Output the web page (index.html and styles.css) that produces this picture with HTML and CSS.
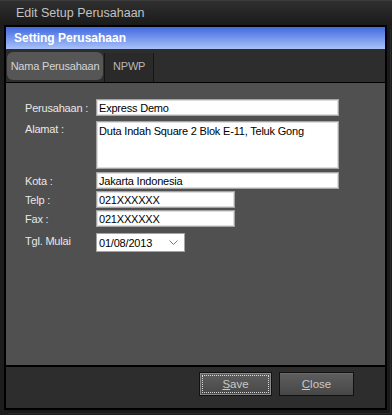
FILE: index.html
```html
<!DOCTYPE html>
<html>
<head>
<meta charset="utf-8">
<title>Edit Setup Perusahaan</title>
<link rel="stylesheet" href="styles.css">
</head>
<body>
<div class="window">
<div class="titlebar">Edit Setup Perusahaan</div>
<div class="frame">
<div class="caption">Setting Perusahaan</div>
<div class="tabs">
<div class="tab active">Nama Perusahaan</div>
<div class="tab">NPWP</div>
</div>
<div class="panel">
<form class="form" onsubmit="return false;">
<label class="lbl">Perusahaan :</label>
<input class="field wide" type="text" value="Express Demo">
<label class="lbl top">Alamat :</label>
<textarea class="field wide area">Duta Indah Square 2 Blok E-11, Teluk Gong</textarea>
<label class="lbl">Kota :</label>
<input class="field wide" type="text" value="Jakarta Indonesia">
<label class="lbl">Telp :</label>
<input class="field short" type="text" value="021XXXXXX">
<label class="lbl">Fax :</label>
<input class="field short" type="text" value="021XXXXXX">
<label class="lbl top">Tgl. Mulai</label>
<div class="date">
<span>01/08/2013</span>
<svg width="9" height="6" viewBox="0 0 9 6"><polyline points="0.5,0.5 4.5,4.5 8.5,0.5" fill="none" stroke="#7a7a7a" stroke-width="1"/></svg>
</div>
</form>
</div>
<div class="footer">
<button type="button" class="btn focus"><span><u>S</u>ave</span></button>
<button type="button" class="btn"><span><u>C</u>lose</span></button>
</div>
</div>
</div>
</body>
</html>
```
FILE: styles.css
```css
body {
 margin: 0;
 background: #1c1c1c;
 font-family: "Liberation Sans", Arial, sans-serif;
}
.window {
 width: 392px;
 height: 415px;
 background: #1d1d1d;
 overflow: hidden;
}
.titlebar {
 height: 25px;
 box-sizing: border-box;
 padding-left: 16px;
 line-height: 24px;
 font-size: 12.5px;
 color: #c2c2c2;
 background: linear-gradient(#2f2f2f, #1a1a1a);
 border-top: 1px solid #3c3c3c;
}
.frame {
 width: 383px;
 height: 385px;
 box-sizing: border-box;
 margin: 0 5px 0 4px;
 border: 2px solid #000;
 display: flex;
 flex-direction: column;
 box-shadow: 3px 3px 0 0 #1a1a1a, 4px 4px 0 0 #2a2a2a;
}
.caption {
 height: 22px;
 line-height: 22px;
 padding-left: 8px;
 font-size: 12px;
 font-weight: bold;
 color: #fff;
 background: linear-gradient(#4169e0, #a9c1f8);
}
.tabs {
 height: 33px;
 display: flex;
 align-items: flex-start;
 background: #2d2d2d;
 border-bottom: 1px solid #000;
 font-size: 11px;
 letter-spacing: -0.2px;
}
.tab {
 box-sizing: border-box;
}
.tab.active {
 width: 96px;
 height: 28px;
 margin: 3px 1px 0 1px;
 line-height: 28px;
 text-align: center;
 border-radius: 6px;
 background: #565656;
 color: #d4d4d4;
}
.tab + .tab {
 width: 50px;
 height: 29px;
 margin-top: 4px;
 padding-left: 8px;
 line-height: 26px;
 color: #b8b8b8;
 background: #2a2a2a;
 border-left: 1px solid #151515;
 border-right: 1px solid #151515;
}
.panel {
 height: 284px;
 box-sizing: border-box;
 padding: 16px 0 0 19px;
 background: #505050;
 border-bottom: 2px solid #000;
}
.form {
 display: grid;
 grid-template-columns: 71px 243px;
 font-size: 11px;
 letter-spacing: -0.2px;
}
.lbl {
 color: #e8e8e8;
 align-self: center;
}
.lbl.top {
 align-self: start;
 padding-top: 2px;
}
.field {
 box-sizing: border-box;
 height: 17px;
 margin: 0;
 padding: 0 2px;
 border: 1px solid #a4a4a4;
 box-shadow: inset 0 0 0 1px #dedede;
 background: #fff;
 color: #000;
 font: inherit;
 letter-spacing: inherit;
 outline: none;
}
.short {
 width: 139px;
}
.area {
 height: 48px;
 padding-top: 3px;
 resize: none;
 overflow: hidden;
}
.form > :nth-child(3), .form > :nth-child(4) {
 margin-top: 5px;
}
.form > :nth-child(5), .form > :nth-child(6) {
 margin-top: 3px;
}
.form > :nth-child(7), .form > :nth-child(8),
.form > :nth-child(9), .form > :nth-child(10) {
 margin-top: 2px;
}
.form > :nth-child(11), .form > :nth-child(12) {
 margin-top: 6px;
}
.date {
 width: 89px;
 height: 19px;
 box-sizing: border-box;
 display: flex;
 align-items: center;
 justify-content: space-between;
 padding: 0 6px 0 2px;
 background: #fff;
 border: 1px solid #a4a4a4;
 color: #000;
}
.footer {
 flex: 1;
 display: flex;
 justify-content: flex-end;
 gap: 7px;
 padding: 5px 31px 0 0;
 background: #2d2d2d;
}
.btn {
 width: 75px;
 height: 24px;
 padding: 2px;
 border: 1px solid #111;
 background: linear-gradient(#5e5e5e, #474747);
 box-shadow: inset 0 1px 0 #6a6a6a;
 color: #c8c8c8;
 font-family: "Liberation Sans", Arial, sans-serif;
 font-size: 11.5px;
}
.btn span {
 display: flex;
 height: 100%;
 align-items: center;
 justify-content: center;
 box-sizing: border-box;
}
.btn.focus {
 width: 73px;
 box-shadow: inset 0 0 0 1px #8a8a8a;
}
.btn.focus span {
 border: 1px dotted #d8d8d8;
}
```
